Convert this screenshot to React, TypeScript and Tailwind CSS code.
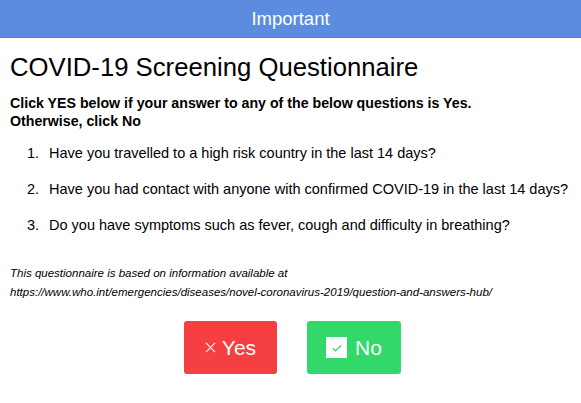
// COVID-19 screening modal: header bar, questions list, Yes/No actions.

const QUESTIONS = [
  "Have you travelled to a high risk country in the last 14 days?",
  "Have you had contact with anyone with confirmed COVID-19 in the last 14 days?",
  "Do you have symptoms such as fever, cough and difficulty in breathing?",
];

function CheckBox(): JSX.Element {
  return (
    <span className="flex h-[21px] w-[21px] items-center justify-center bg-white">
      <svg viewBox="0 0 16 16" className="h-[12px] w-[12px]" fill="none">
        <path d="M2.5 8.5l3.5 3.5 7.5-7.5" stroke="#33d86a" strokeWidth="1.6" />
      </svg>
    </span>
  );
}

export default function App(): JSX.Element {
  return (
    <div className="h-[403px] w-[581px] overflow-hidden bg-white font-['Liberation_Sans',Arial,sans-serif] text-black">
      <div className="flex h-[38px] items-center justify-center border-b border-[#4f7ed0] bg-[#5b8ce0] text-[18.5px] text-white">
        Important
      </div>
      <div className="px-[10px]">
        <h1 className="mt-[14px] text-[25.7px] leading-[30px]">COVID-19 Screening Questionnaire</h1>
        <p className="mt-[12px] text-[14.2px] font-bold leading-[18px]">
          Click YES below if your answer to any of the below questions is Yes.
          <br />
          Otherwise, click No
        </p>
        <ol className="mt-[14px] flex flex-col gap-[18px]">
          {QUESTIONS.map((q, i) => (
            <li key={i} className="flex whitespace-nowrap text-[14.5px] leading-[18px]">
              <span className="w-[29px] text-right">{i + 1}.</span>
              <span className="ml-[10px]">{q}</span>
            </li>
          ))}
        </ol>
        <p className="mt-[30px] text-[11.5px] italic leading-[19px]">
          This questionnaire is based on information available at
          <br />
          https://www.who.int/emergencies/diseases/novel-coronavirus-2019/question-and-answers-hub/
        </p>
        <div className="mt-[19px] flex justify-center gap-[30px] pl-[4px]">
          <button className="flex h-[53px] w-[93px] items-center justify-center gap-[6px] rounded-[3px] bg-[#f53f42] text-[21px] text-white">
            <svg viewBox="0 0 12 12" className="h-[11px] w-[11px]">
              <path d="M1 1l10 10M11 1L1 11" stroke="white" strokeWidth="1.2" />
            </svg>
            Yes
          </button>
          <button className="flex h-[53px] w-[94px] items-center justify-center gap-[8px] rounded-[3px] bg-[#33d86a] text-[21px] text-white">
            <CheckBox />
            No
          </button>
        </div>
      </div>
    </div>
  );
}
